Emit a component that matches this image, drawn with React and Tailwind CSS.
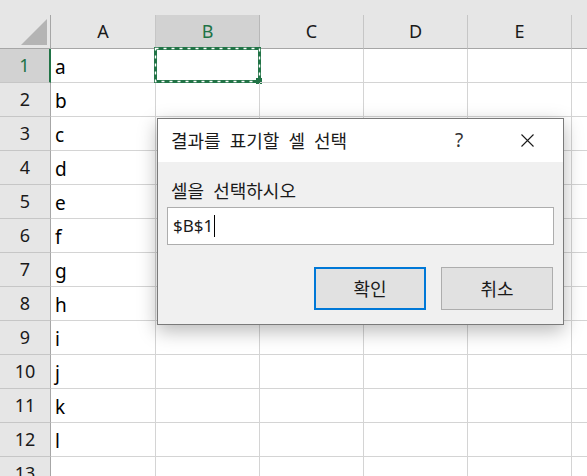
import { useState } from 'react';

const columns = ['A', 'B', 'C', 'D', 'E', 'F'];
const values = ['a', 'b', 'c', 'd', 'e', 'f', 'g', 'h', 'i', 'j', 'k', 'l', ''];

function SelectionBox() {
    // marching-ants border around B1
    return (
        <svg className="absolute left-[-2px] top-[-2px] pointer-events-none" width="108" height="37">
            <rect x="1.5" y="1.5" width="104" height="33" fill="none" stroke="#217346" strokeWidth="3" />
            <rect x="1.5" y="1.5" width="104" height="33" fill="none" stroke="#ffffff" strokeWidth="1.4" strokeDasharray="3 5" />
            <rect x="102" y="31" width="6" height="6" fill="#217346" />
        </svg>
    );
}

function CloseIcon() {
    return (
        <svg width="13" height="13" viewBox="0 0 13 13">
            <path d="M0.5 0.5 L12.5 12.5 M12.5 0.5 L0.5 12.5" stroke="#1a1a1a" strokeWidth="1.1" fill="none" />
        </svg>
    );
}

export default function App() {
    const [ref] = useState('$B$1');

    return (
        <div className="relative w-[587px] h-[476px] overflow-hidden bg-white" style={{ fontFamily: '"Noto Sans", "Noto Sans CJK KR", sans-serif' }}>
            {/* sheet */}
            <div className="h-[15px] bg-[#e6e6e6]" />
            <div className="grid grid-cols-[51px_105px_104px_104px_104px_104px_104px] auto-rows-[34px]">
                {/* corner */}
                <div className="bg-[#e6e6e6] border-r border-b border-[#a6a6a6] flex items-end justify-end pr-[3px] pb-[3px]">
                    <div className="w-[26px] h-[26px] bg-[#b4b4b4] [clip-path:polygon(100%_0,100%_100%,0_100%)]" />
                </div>
                {columns.map(col => (
                    <div
                        key={col}
                        className={`flex items-center justify-center border-r border-b text-[18px] ${col === 'B' ? 'bg-[#d2d2d2] text-[#217346] border-r-[#b8b8b8] border-b-[#a6a6a6]' : 'bg-[#e6e6e6] text-[#1a1a1a] border-r-[#c6c6c6] border-b-[#a6a6a6]'}`}
                    >
                        {col === 'F' ? '' : col}
                    </div>
                ))}

                {values.map((v, i) => (
                    <Row key={i} n={i + 1} value={v} />
                ))}
            </div>

            {/* dialog */}
            <div className="absolute left-[157px] top-[118px] w-[407px] h-[207px] border border-[#7a7a7a] bg-[#f0f0f0] shadow-[0_6px_18px_rgba(0,0,0,0.28)] flex flex-col" style={{ fontFamily: '"Noto Sans CJK KR", sans-serif' }}>
                <div className="h-[43px] shrink-0 bg-white flex items-center pl-[13px] pr-[29px] text-[18px] text-[#1a1a1a]">
                    <span className="flex-1 [word-spacing:5px]">결과를 표기할 셀 선택</span>
                    <span className="w-[66px] text-[19px] text-[#333]" style={{ fontFamily: '"Noto Sans", sans-serif' }}>?</span>
                    <CloseIcon />
                </div>
                <div className="flex-1 flex flex-col px-[9px] pt-[15px]">
                    <label className="pl-[4px] text-[18px] leading-[26px] text-[#1a1a1a] [word-spacing:5px]">셀을 선택하시오</label>
                    <div className="mt-[4px] h-[38px] bg-white border border-[#adadad] flex items-center pl-[5px] text-[17px] text-[#1a1a1a]" style={{ fontFamily: '"Noto Sans", sans-serif' }}>
                        {ref}
                        <span className="ml-[1px] w-px h-[22px] bg-black" />
                    </div>
                    <div className="mt-[22px] flex justify-end gap-[15px] pr-[1px]">
                        <button className="w-[112px] h-[43px] bg-[#e1e1e1] border-2 border-[#0078d7] text-[18px] text-[#1a1a1a]">확인</button>
                        <button className="w-[112px] h-[43px] bg-[#e1e1e1] border border-[#adadad] text-[18px] text-[#1a1a1a]">취소</button>
                    </div>
                </div>
            </div>
        </div>
    );
}

function Row({ n, value }) {
    const active = n === 1;
    return (
        <>
            <div className={`flex items-center justify-center border-b border-b-[#c6c6c6] text-[18px] ${active ? 'bg-[#d2d2d2] text-[#217346] border-r-2 border-r-[#217346]' : 'bg-[#e6e6e6] text-[#1a1a1a] border-r border-r-[#a6a6a6]'}`}>
                {n}
            </div>
            {columns.map(col => (
                <div key={col} className="relative border-r border-b border-[#d4d4d4] flex items-end pl-[4px] pb-[2px] text-[19px] leading-[26px] text-black">
                    {col === 'A' ? value : ''}
                    {active && col === 'B' ? <SelectionBox /> : null}
                </div>
            ))}
        </>
    );
}
